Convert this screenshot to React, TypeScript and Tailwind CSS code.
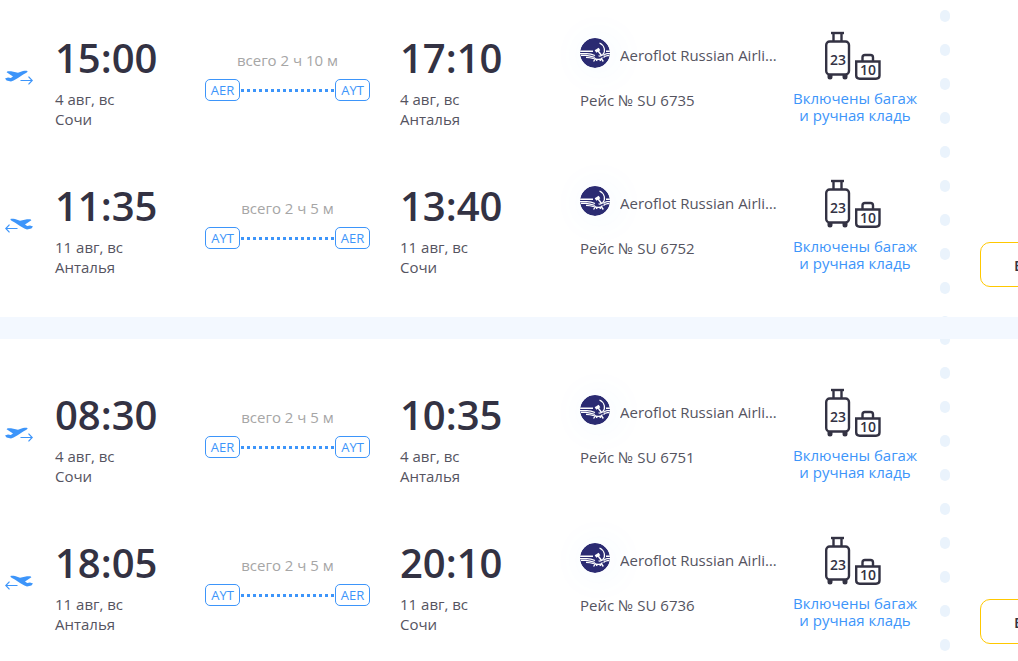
import React from 'react';

interface Leg {
  direction: 'out' | 'back';
  departure: string;
  arrival: string;
  date: string;
  fromCity: string;
  toCity: string;
  fromCode: string;
  toCode: string;
  duration: string;
  flight: string;
}

interface Ticket {
  id: number;
  legs: Leg[];
}

const outbound = { direction: 'out' as const, date: '4 авг, вс', fromCity: 'Сочи', toCity: 'Анталья', fromCode: 'AER', toCode: 'AYT' };
const inbound = { direction: 'back' as const, date: '11 авг, вс', fromCity: 'Анталья', toCity: 'Сочи', fromCode: 'AYT', toCode: 'AER' };

const tickets: Ticket[] = [
  {
    id: 1,
    legs: [
      { ...outbound, departure: '15:00', arrival: '17:10', duration: '2 ч 10 м', flight: 'SU 6735' },
      { ...inbound, departure: '11:35', arrival: '13:40', duration: '2 ч 5 м', flight: 'SU 6752' },
    ],
  },
  {
    id: 2,
    legs: [
      { ...outbound, departure: '08:30', arrival: '10:35', duration: '2 ч 5 м', flight: 'SU 6751' },
      { ...inbound, departure: '18:05', arrival: '20:10', duration: '2 ч 5 м', flight: 'SU 6736' },
    ],
  },
];

const PlaneIcon = ({ back }: { back: boolean }) => (
  <svg
    viewBox="0 0 28 16"
    className={`w-7 h-4 text-[#3d95fa] ${back ? '-scale-x-100' : ''}`}
    fill="none"
    aria-hidden="true"
  >
    <path
      d="M0 8.600 3 7.600 5.800 8 8 6.400 1.600 2.200 2.600 1.200 6 1.200 13 2.700 18 1.100C20 .6 22.600.4 22.600 1.300 22.400 2.500 20 3.600 18.200 4.600L13 8 8.600 10.600 6 11.400 1.600 10.600Z"
      fill="currentColor"
    />
    <path d="M15.500 10.500H27M23.500 6.700 27.200 10.500 23.500 14.300" stroke="currentColor" strokeWidth="1.2" />
  </svg>
);

const AirlineLogo = () => (
  <svg
    viewBox="0 0 30 30"
    className="w-[30px] h-[30px] shrink-0 rounded-full shadow-[4px_2px_36px_4px_rgba(61,149,250,0.05)]"
    aria-hidden="true"
  >
    <circle cx="15" cy="15" r="15" fill="#2b2b72" />
    <g stroke="#fff" fill="none">
      <path d="M0 13.300H13M30 13.300H26" strokeWidth="1.600" />
      <path d="M0 15.600H7Q11 15.800 15 17.500M1 17.400H6Q10 17.800 14.500 19.300M6 19.300Q10 19.300 14 20.800M30 15.600H27Q25 15.800 23.500 17.500M29.500 17.600H27.500Q25 18 23.500 19.500" strokeWidth="1.200" />
      <path d="M14 19.500C15.500 22 21 22 22.500 19.500M15.500 20.500 13.600 23.500M21.300 20.500 23.300 23.500M17 21.500 16.500 23M20 21.500 20.500 23" strokeWidth="1.400" />
      <path d="M19.500 5C24.800 7.500 26 13.500 22.500 17Q20.500 18.500 18.500 17.800" strokeWidth="1.200" />
      <path d="M15.500 13.600 19.500 11" strokeWidth="3" />
      <path d="M17.800 12.500 21.500 17.500" strokeWidth="1.500" />
    </g>
  </svg>
);

const LuggageIcon = () => (
  <svg viewBox="0 0 60 49" className="w-[60px] h-[49px]" fill="none" role="img" aria-label="Багаж 23 кг, ручная кладь 10 кг">
    <g stroke="#333243" strokeWidth="2.4">
      <path d="M6 2H19" />
      <path d="M8.500 2V10M16.500 2V10" />
      <rect x="1.200" y="10.500" width="22.800" height="33" rx="3.500" />
      <path d="M31.200 30.500H54.500V44.500Q54.500 47.700 51 47.700H34.700Q31.200 47.700 31.200 44.500Z" />
      <path d="M37.500 30V26.500Q37.500 24 40 24H45.500Q48 24 48 26.500V30" />
    </g>
    <path d="M2.500 44H7.500V46A2.500 2.500 0 0 1 2.500 46ZM17.500 44H22.500V46A2.500 2.500 0 0 1 17.500 46Z" fill="#333243" />
    <g fill="#333243" fontSize="14" fontWeight="600" textAnchor="middle">
      <text x="13" y="34">23</text>
      <text x="43" y="44">10</text>
    </g>
  </svg>
);

const Stop = ({ time, date, city }: { time: string; date: string; city: string }) => (
  <div className="pt-2">
    <div className="text-[40px] leading-10 font-semibold text-[#333243] mb-[11px]">{time}</div>
    <div>{date}</div>
    <div>{city}</div>
  </div>
);

const AirportCode = ({ code }: { code: string }) => (
  <span className="w-[35px] h-[22px] flex items-center justify-center rounded-[5px] border border-[#3d95fa] text-[13px] leading-4 pb-px text-[#3d95fa]">
    {code}
  </span>
);

const LegRow = ({ leg }: { leg: Leg }) => (
  <div className="h-[148px] grid grid-cols-[50px_150px_195px_180px_200px_150px] pl-[5px]">
    <div className="pt-10">
      <PlaneIcon back={leg.direction === 'back'} />
    </div>

    <Stop time={leg.departure} date={leg.date} city={leg.fromCity} />

    <div className="w-[165px] pt-5">
      <div className="text-center text-[#a6a6a6] mb-[9px]">всего {leg.duration}</div>
      <div className="flex items-center gap-px">
        <AirportCode code={leg.fromCode} />
        <div className="flex-1 h-[3px] bg-[repeating-linear-gradient(90deg,#3d95fa_0_3px,transparent_3px_6px)]" />
        <AirportCode code={leg.toCode} />
      </div>
    </div>

    <Stop time={leg.arrival} date={leg.date} city={leg.toCity} />

    <div className="pt-2">
      <div className="flex items-center gap-2.5 mb-[22px]">
        <AirlineLogo />
        <span className="w-[158px] truncate pt-[3px]">Aeroflot Russian Airlines</span>
      </div>
      <div>Рейс № {leg.flight}</div>
    </div>

    <div className="flex flex-col items-center pt-px">
      <LuggageIcon />
      <div className="mt-2.5 text-center leading-[17px] text-[#3d95fa]">
        Включены багаж
        <br />
        и ручная кладь
      </div>
    </div>
  </div>
);

const Perforation = () => (
  <div className="w-2.5 ml-2.5 shrink-0 contain-size overflow-hidden" aria-hidden="true">
    <div className="-mt-1.5 flex flex-col gap-[22px]">
      {Array.from({ length: 11 }, (_, i) => (
        <span key={i} className="h-3 rounded-full bg-[#eaf3fc]" />
      ))}
    </div>
  </div>
);

const TicketCard = ({ ticket }: { ticket: Ticket }) => (
  <article className="flex bg-white">
    <div className="shrink-0 pt-12 -mb-[9px]">
      {ticket.legs.map((leg) => (
        <LegRow key={leg.flight} leg={leg} />
      ))}
    </div>

    <Perforation />

    <div className="flex-1 min-w-60 flex items-end pl-[30px] pb-[30px]">
      <button
        type="button"
        className="h-[45px] px-[33px] rounded-[10px] border border-[#ffc800] font-semibold text-[#333243] cursor-pointer hover:bg-[#fff8dd]"
      >
        Выбрать
      </button>
    </div>
  </article>
);

export default function App() {
  return (
    <main className="min-h-screen overflow-hidden bg-[#f3f8ff] font-['Open_Sans','Noto_Sans',sans-serif] text-[15px] leading-5 text-[#55545f]">
      <div className="-mt-[18px] flex flex-col gap-[22px]">
        {tickets.map((ticket) => (
          <TicketCard key={ticket.id} ticket={ticket} />
        ))}
      </div>
    </main>
  );
}
